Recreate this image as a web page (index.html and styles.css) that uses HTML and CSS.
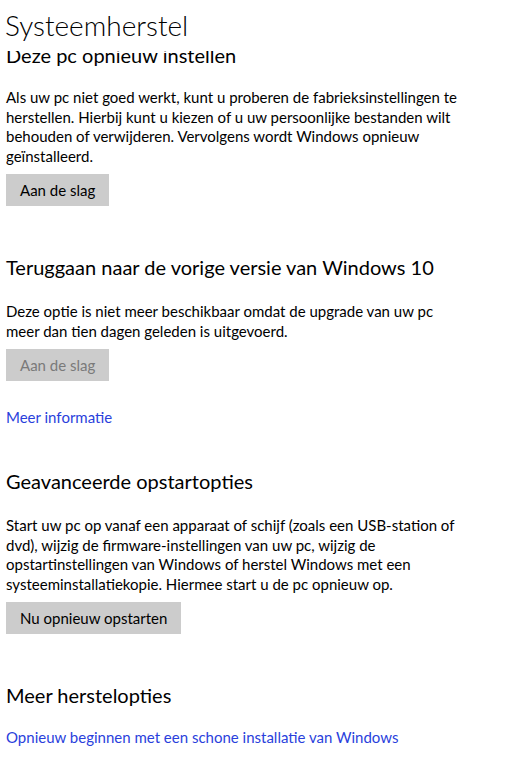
FILE: index.html
```html
<!DOCTYPE html>
<html lang="nl">
<head>
    <meta charset="UTF-8">
    <title>Systeemherstel</title>
    <meta name="viewport" content="width=device-width, initial-scale=1.0">
    <link rel="stylesheet" href="styles.css">
</head>
<body>
    <div class="page-title">Systeemherstel</div>
    <div class="content">
        <div class="section first">
            <h2>Deze pc opnieuw instellen</h2>
            <p>Als uw pc niet goed werkt, kunt u proberen de fabrieksinstellingen te herstellen. Hierbij kunt u kiezen of u uw persoonlijke bestanden wilt behouden of verwijderen. Vervolgens wordt Windows opnieuw geïnstalleerd.</p>
            <button>Aan de slag</button>
        </div>

        <div class="section">
            <h2>Teruggaan naar de vorige versie van Windows 10</h2>
            <p>Deze optie is niet meer beschikbaar omdat de upgrade van uw pc meer dan tien dagen geleden is uitgevoerd.</p>
            <button disabled>Aan de slag</button>
            <a class="link more-info" href="#">Meer informatie</a>
        </div>

        <div class="section after-link">
            <h2>Geavanceerde opstartopties</h2>
            <p>Start uw pc op vanaf een apparaat of schijf (zoals een USB-station of dvd), wijzig de firmware-instellingen van uw pc, wijzig de opstartinstellingen van Windows of herstel Windows met een systeeminstallatiekopie. Hiermee start u de pc opnieuw op.</p>
            <button>Nu opnieuw opstarten</button>
        </div>

        <div class="section">
            <h2>Meer herstelopties</h2>
            <a class="link only-link" href="#">Opnieuw beginnen met een schone installatie van Windows</a>
        </div>
    </div>
</body>
</html>
```

FILE: styles.css
```css
* {
    box-sizing: border-box;
}

body {
    margin: 0;
    background: #fff;
    color: #000;
    font-family: Lato, "Open Sans", sans-serif;
    overflow: hidden;
}

.page-title {
    position: relative;
    z-index: 1;
    height: 51px;
    padding: 8px 0 0 5px;
    background: #fff;
    font-size: 28px;
    font-weight: 300;
    line-height: 34px;
}

.content {
    margin-top: -10px;
    padding: 0 0 0 6px;
    width: 460px;
}

.section {
    padding-top: 47px;
}

.section.first {
    padding-top: 0;
}

.section.first h2 {
    margin-bottom: 19px;
}

.section.after-link {
    padding-top: 40px;
}

h2 {
    margin: 0 0 21px;
    font-size: 20px;
    font-weight: 400;
    line-height: 28px;
}

p {
    margin: 0 0 8px;
    font-size: 15px;
    line-height: 19.5px;
}

button {
    display: block;
    height: 32px;
    padding: 0 14px;
    border: none;
    background: #ccc;
    color: #000;
    font-family: inherit;
    font-size: 15px;
}

button:disabled {
    color: #7a7a7a;
}

.link {
    display: block;
    color: #2a3fdc;
    font-size: 15px;
    line-height: 20px;
    text-decoration: none;
}

.more-info {
    margin-top: 26px;
}

.only-link {
    margin-top: -3px;
}
```
